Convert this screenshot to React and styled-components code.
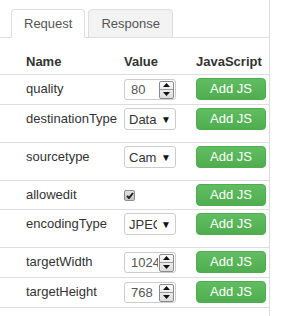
import React from "react";
import styled, { createGlobalStyle } from "styled-components";

const GlobalStyle = createGlobalStyle`
  body {
    margin: 0;
    background: #fff;
    font-family: "Liberation Sans", Arial, Helvetica, sans-serif;
    font-size: 13px;
    color: #333;
  }
`;

const Panel = styled.div`
  width: 269px;
  min-height: 316px;
  padding-top: 9px;
  border-right: 1px solid #ddd;
  box-sizing: content-box;
`;

const TabBar = styled.ul`
  display: flex;
  gap: 3px;
  margin: 0;
  padding: 0 0 0 11px;
  list-style: none;
  border-bottom: 1px solid #ddd;
`;

const Tab = styled.li`
  margin-bottom: -1px;
  padding: 0 12px;
  line-height: 27px;
  color: #555;
  background: ${({ $active }) => ($active ? "#fff" : "#f3f3f3")};
  border: 1px solid #ddd;
  border-bottom-color: ${({ $active }) => ($active ? "#fff" : "#ddd")};
  border-radius: 4px 4px 0 0;
  cursor: pointer;
`;

const Table = styled.table`
  width: 269px;
  border-collapse: collapse;
  table-layout: fixed;
`;

const HeadCell = styled.th`
  padding: 15px 5px 3px;
  padding-left: ${({ $first }) => ($first ? "26px" : "5px")};
  line-height: 18px;
  text-align: left;
  font-weight: bold;
  color: #333;
`;

const Row = styled.tr`
  &:last-child td {
    border-bottom: 1px solid #ddd;
  }
`;

const Cell = styled.td`
  padding: 3px 5px ${({ $tight }) => ($tight ? "3px" : "4px")};
  padding-left: ${({ $first }) => ($first ? "26px" : "5px")};
  border-top: 1px solid #ddd;
  vertical-align: top;
  line-height: 22px;
  white-space: nowrap;
`;

const Field = styled.div`
  display: flex;
  align-items: center;
  width: 52px;
  margin-top: ${({ $select }) => ($select ? "0" : "1px")};
  margin-bottom: ${({ $select }) => ($select ? "8px" : "0")};
  height: ${({ $select }) => ($select ? "22px" : "21px")};
  box-sizing: border-box;
  border: 1px solid #ccc;
  border-radius: 3px;
  background: #fff;
  color: #555;
  font-size: 13px;
`;

const FieldText = styled.span`
  flex: none;
  width: ${({ $select }) => ($select ? "28px" : "27px")};
  margin-left: ${({ $select }) => ($select ? "4px" : "6px")};
  overflow: hidden;
  white-space: nowrap;
  line-height: 19px;
  color: ${({ $select }) => ($select ? "#333" : "#555")};
`;

const Caret = styled.span`
  margin-left: auto;
  margin-right: 4px;
  font-size: 10px;
  color: #111;
  line-height: 19px;
`;

const Spinner = styled.span`
  display: flex;
  flex-direction: column;
  width: 13px;
  height: 16px;
  margin-left: auto;
  margin-right: 1px;
  border: 1px solid #8a8a8a;
  border-radius: 2px;
  background: linear-gradient(#fbfbfb, #dcdcdc);
  overflow: hidden;
`;

const SpinHalf = styled.span`
  flex: 1;
  display: flex;
  align-items: center;
  justify-content: center;
  & + & {
    border-top: 1px solid #9a9a9a;
  }
`;

const Check = styled.span`
  display: inline-flex;
  align-items: center;
  justify-content: center;
  width: 11px;
  height: 11px;
  margin-top: 6px;
  box-sizing: border-box;
  border: 1px solid #8c8c8c;
  border-radius: 2px;
  background: linear-gradient(#e2e2e2, #c4c4c4);
`;

const AddButton = styled.button`
  display: block;
  width: 70px;
  height: 22px;
  padding: 0;
  border: 1px solid #4cae4c;
  border-radius: 4px;
  background: linear-gradient(#62bd62, #4fad4f);
  color: #fff;
  font-family: inherit;
  font-size: 13px;
  line-height: 20px;
  cursor: pointer;
`;

const params = [
  { name: "quality", kind: "number", value: "80" },
  { name: "destinationType", kind: "select", value: "Data" },
  { name: "sourcetype", kind: "select", value: "Camera" },
  { name: "allowedit", kind: "check" },
  { name: "encodingType", kind: "select", value: "JPEG" },
  { name: "targetWidth", kind: "number", value: "1024" },
  { name: "targetHeight", kind: "number", value: "768" },
];

const Arrow = ({ up }) => (
  <svg width="7" height="4" viewBox="0 0 7 4">
    <path d={up ? "M0 4 L3.5 0 L7 4 Z" : "M0 0 L3.5 4 L7 0 Z"} fill="#111" />
  </svg>
);

const Control = ({ kind, value }) => {
  if (kind === "check") {
    return (
      <Check>
        <svg width="8" height="7" viewBox="0 0 8 7">
          <path d="M1 3.8 L3 6 L7 1" stroke="#222" strokeWidth="2" fill="none" />
        </svg>
      </Check>
    );
  }
  if (kind === "select") {
    return (
      <Field $select>
        <FieldText $select>{value}</FieldText>
        <Caret>▼</Caret>
      </Field>
    );
  }
  return (
    <Field>
      <FieldText>{value}</FieldText>
      <Spinner>
        <SpinHalf>
          <Arrow up />
        </SpinHalf>
        <SpinHalf>
          <Arrow />
        </SpinHalf>
      </Spinner>
    </Field>
  );
};

const App = () => {
  return (
    <Panel>
      <GlobalStyle />
      <TabBar>
        <Tab $active>Request</Tab>
        <Tab>Response</Tab>
      </TabBar>
      <Table>
        <colgroup>
          <col style={{ width: 119 }} />
          <col style={{ width: 72 }} />
          <col style={{ width: 78 }} />
        </colgroup>
        <thead>
          <tr>
            <HeadCell $first>Name</HeadCell>
            <HeadCell>Value</HeadCell>
            <HeadCell>JavaScript</HeadCell>
          </tr>
        </thead>
        <tbody>
          {params.map((p) => {
            const tight = p.kind === "check";
            return (
              <Row key={p.name}>
                <Cell $first $tight={tight}>{p.name}</Cell>
                <Cell $tight={tight}>
                  <Control kind={p.kind} value={p.value} />
                </Cell>
                <Cell $tight={tight}>
                  <AddButton>Add JS</AddButton>
                </Cell>
              </Row>
            );
          })}
        </tbody>
      </Table>
    </Panel>
  );
};

export default App;
